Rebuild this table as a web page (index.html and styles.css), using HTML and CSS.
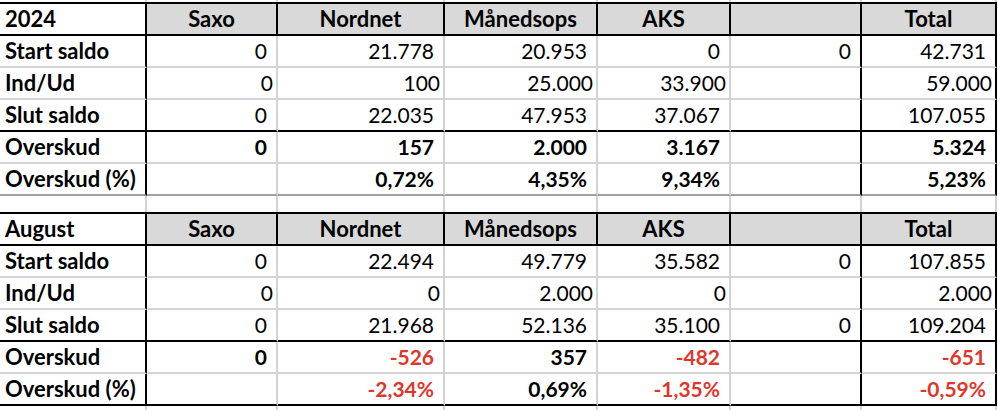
FILE: index.html
```html
<!DOCTYPE html>
<html lang="da">
<head>
<meta charset="utf-8">
<title>Overskud</title>
<link rel="stylesheet" href="styles.css">
</head>
<body>
<div class="sheet">
  <div class="row strip top-strip"><div></div><div></div><div></div><div></div><div></div><div></div><div></div></div>

  <div class="table">
    <div class="row hdr"><div class="lbl">2024</div><div>Saxo</div><div>Nordnet</div><div>Månedsops</div><div>AKS</div><div></div><div>Total</div></div>
    <div class="row"><div class="lbl">Start saldo</div><div>0</div><div>21.778</div><div>20.953</div><div>0</div><div>0</div><div>42.731</div></div>
    <div class="row inout"><div class="lbl">Ind/Ud</div><div>0</div><div>100</div><div>25.000</div><div>33.900</div><div></div><div>59.000</div></div>
    <div class="row pre"><div class="lbl">Slut saldo</div><div>0</div><div>22.035</div><div>47.953</div><div>37.067</div><div></div><div>107.055</div></div>
    <div class="row bold"><div class="lbl">Overskud</div><div>0</div><div>157</div><div>2.000</div><div>3.167</div><div></div><div>5.324</div></div>
    <div class="row bold end-soft"><div class="lbl">Overskud (%)</div><div></div><div>0,72%</div><div>4,35%</div><div>9,34%</div><div></div><div>5,23%</div></div>
  </div>

  <div class="row strip gap-strip"><div></div><div></div><div></div><div></div><div></div><div></div><div></div></div>

  <div class="table">
    <div class="row hdr"><div class="lbl">August</div><div>Saxo</div><div>Nordnet</div><div>Månedsops</div><div>AKS</div><div></div><div>Total</div></div>
    <div class="row"><div class="lbl">Start saldo</div><div>0</div><div>22.494</div><div>49.779</div><div>35.582</div><div>0</div><div>107.855</div></div>
    <div class="row inout"><div class="lbl">Ind/Ud</div><div>0</div><div>0</div><div>2.000</div><div>0</div><div></div><div>2.000</div></div>
    <div class="row pre"><div class="lbl">Slut saldo</div><div>0</div><div>21.968</div><div>52.136</div><div>35.100</div><div>0</div><div>109.204</div></div>
    <div class="row bold"><div class="lbl">Overskud</div><div>0</div><div class="neg">-526</div><div>357</div><div class="neg">-482</div><div></div><div class="neg">-651</div></div>
    <div class="row bold end-hard"><div class="lbl">Overskud (%)</div><div></div><div class="neg">-2,34%</div><div>0,69%</div><div class="neg">-1,35%</div><div></div><div class="neg">-0,59%</div></div>
  </div>

  <div class="row strip bottom-strip"><div></div><div></div><div></div><div></div><div></div><div></div><div></div></div>
</div>
</body>
</html>
```

FILE: styles.css
```css
html, body {
  margin: 0;
  padding: 0;
  background: #ffffff;
}

body {
  font-family: Lato, "Open Sans", sans-serif;
  color: #000000;
  width: 998px;
  height: 410px;
  overflow: hidden;
}

.sheet {
  display: flex;
  flex-direction: column;
  width: 997px;
}

.table {
  display: flex;
  flex-direction: column;
  border-top: 2px solid #000000;
}

.row {
  display: grid;
  grid-template-columns: 147px 131px 167px 153px 133px 131px 135px;
}

.row > div {
  box-sizing: border-box;
  height: 32px;
  line-height: 30px;
  border-right: 2px solid #d3d3d3;
  border-bottom: 2px solid #d3d3d3;
  padding-right: 9px;
  text-align: right;
  font-size: 21px;
  white-space: nowrap;
  overflow: hidden;
}

.row > div:first-child,
.row > div:nth-child(6),
.row > div:nth-child(7) {
  border-right-color: #000000;
}

.row > .lbl {
  text-align: left;
  padding-left: 5px;
  padding-right: 0;
  font-weight: 700;
  font-size: 22px;
}

.hdr > div {
  background: #d9d9d9;
  border-right-color: #000000;
  border-bottom-color: #000000;
  text-align: center;
  padding-right: 0;
  font-weight: 700;
  font-size: 22px;
}

.hdr > .lbl {
  background: #ffffff;
}

.inout > div {
  padding-right: 3px;
}

.pre > div {
  border-bottom-color: #000000;
}

.bold > div {
  font-weight: 700;
}

.end-soft > div {
  border-bottom-color: #a0a0a0;
}

.end-hard > div {
  border-bottom-color: #000000;
}

.neg {
  color: #e0362c;
}

.strip > div {
  border-bottom: none;
  border-right-color: #d3d3d3;
  padding: 0;
}

.row.strip > div:first-child,
.row.strip > div:nth-child(6),
.row.strip > div:nth-child(7) {
  border-right-color: #d3d3d3;
}

.top-strip > div {
  height: 2px;
}

.gap-strip > div {
  height: 16px;
}

.bottom-strip > div {
  height: 6px;
}
```
